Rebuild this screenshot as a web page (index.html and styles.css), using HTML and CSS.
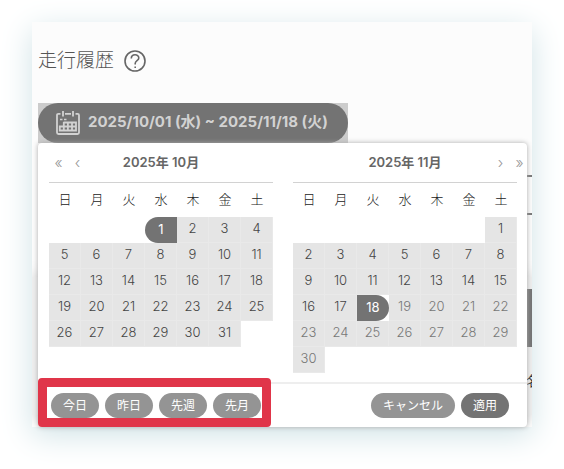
FILE: index.html
```html
<!DOCTYPE html>
<html lang="ja">

<head>
  <meta charset="UTF-8" />
  <meta name="viewport" content="width=device-width, initial-scale=1.0" />
  <title>走行履歴</title>
  <link rel="stylesheet" href="styles.css">
</head>

<body>
  <main class="frame">
    <!-- 背後の一覧 -->
    <div class="backdrop" aria-hidden="true">
      <div class="field"></div>
      <div class="results">
        <div class="results-head"></div>
        <div class="results-name">名</div>
      </div>
    </div>

    <div class="content">
      <header class="title">
        <h1>走行履歴</h1>
        <button class="help" aria-label="ヘルプ">
          <svg width="22" height="22" viewBox="0 0 22 22" fill="none" stroke="#666" stroke-width="1.6">
            <circle cx="11" cy="11" r="10" />
            <path d="M7.3 8.5C7.3 3.6 14.8 3.7 14.8 8C14.8 10.7 11.2 10.7 11.2 13.5V14.6M11.2 16.5V18.1" />
          </svg>
        </button>
      </header>

      <div class="range-wrap">
        <button class="range">
          <svg width="24" height="24" viewBox="0 0 24 24" fill="none" stroke="#d2d2d2" stroke-width="1.8">
            <path d="M4.5 2.8H2.4Q1 2.8 1 4.2V21.5Q1 23 2.5 23H21.5Q23 23 23 21.5V4.2Q23 2.8 21.6 2.8H19.5M9 2.8H15M7 0V5.5M17 0V5.5" />
            <path d="M4 8.5H6.5M8 8.5H10.5" stroke-width="1.4" />
            <path d="M7.5 11.5H20V19.5H3.8V15.5H20M7.8 11V19.5M11.9 11V19.5M16 11V19.5" stroke-width="1.8" />
          </svg>
          <span>2025/10/01 (水) ~ 2025/11/18 (火)</span>
        </button>
      </div>

      <section class="picker">
        <div class="months">
          <div class="month">
            <div class="month-head">
              <div class="nav">
                <button aria-label="前年">«</button>
                <button aria-label="前月">‹</button>
              </div>
              <h2>2025年 10月</h2>
            </div>
            <table class="days" data-start="3" data-count="31" data-from="1"></table>
          </div>
          <div class="month">
            <div class="month-head">
              <h2>2025年 11月</h2>
              <div class="nav nav-next">
                <button aria-label="翌月">›</button>
                <button aria-label="翌年">»</button>
              </div>
            </div>
            <table class="days" data-start="6" data-count="30" data-to="18"></table>
          </div>
        </div>

        <footer class="actions">
          <div class="presets">
            <button class="pill">今日</button>
            <button class="pill">昨日</button>
            <button class="pill">先週</button>
            <button class="pill">先月</button>
          </div>
          <div class="confirm">
            <button class="pill">キャンセル</button>
            <button class="pill pill-apply">適用</button>
          </div>
          <div class="highlight"></div>
        </footer>
      </section>
    </div>
  </main>

  <script>
    const week = ['日', '月', '火', '水', '木', '金', '土'];

    document.querySelectorAll('.days').forEach((table) => {
      const start = Number(table.dataset.start);
      const count = Number(table.dataset.count);
      const from = Number(table.dataset.from);
      const to = Number(table.dataset.to);

      const head = table.createTHead().insertRow();
      week.forEach((name) => {
        const th = document.createElement('th');
        th.scope = 'col';
        th.textContent = name;
        head.appendChild(th);
      });

      const body = table.createTBody();
      for (let i = 0; i < start + count; i += 7) {
        const row = body.insertRow();
        for (let d = i - start + 1; d < i - start + 8; d++) {
          const cell = row.insertCell();
          if (d < 1 || d > count) continue;

          const button = document.createElement('button');
          button.className = 'day';
          button.textContent = d;
          if (d === from) button.classList.add('day-from');
          if (d === to) button.classList.add('day-to');
          // 未来の日付は選択不可
          if (to && d > to) button.disabled = true;
          cell.appendChild(button);
        }
      }
    });
  </script>
</body>

</html>
```

FILE: styles.css
```css
* {
  box-sizing: border-box;
}

body {
  margin: 0;
  padding: 22px 32px 40px;
  background: #fff;
  color: #555;
  font-family: Inter, "Noto Sans CJK JP", sans-serif;
  font-size: 13px;
}

button {
  margin: 0;
  padding: 0;
  border: none;
  background: none;
  color: inherit;
  font: inherit;
  cursor: pointer;
}

h1,
h2 {
  margin: 0;
}

.frame {
  display: grid;
  background: #fcfcfc;
  box-shadow: 0 8px 30px #cfe2e6;
}

.backdrop,
.content {
  grid-area: 1 / 1;
  min-width: 0;
}

.backdrop {
  overflow: hidden;
  padding-top: 153px;
}

.field {
  height: 40px;
  margin-left: 20px;
  border-top: 2px solid #777;
  border-bottom: 2px solid #777;
}

.results {
  height: 138px;
  margin-top: 62px;
  padding-top: 12px;
  background: #eee;
  box-shadow: 0 0 16px #ccc;
}

.results-head {
  height: 58px;
  margin-left: 20px;
  background: #737373;
}

.results-name {
  margin: 24px -8px 0 0;
  color: #333;
  font-size: 14px;
  line-height: 20px;
  text-align: right;
}

.content {
  position: relative;
  padding: 0 5px 0 6px;
}

.title {
  display: flex;
  align-items: center;
  gap: 10px;
  height: 81px;
  padding-bottom: 3px;
}

.title h1 {
  color: #555;
  font-size: 19px;
  font-weight: 300;
  line-height: 28px;
}

.help,
.help svg,
.range svg {
  display: block;
}

.range-wrap {
  width: fit-content;
  background: #ccc;
}

.range {
  display: flex;
  align-items: center;
  gap: 8px;
  height: 40px;
  padding: 0 20px 0 18px;
  border-radius: 20px;
  background: #737373;
  color: #d2d2d2;
  font-size: 15px;
  font-weight: 700;
  line-height: 20px;
  white-space: nowrap;
}

.range span {
  padding-bottom: 3px;
}

.picker {
  border-radius: 4px;
  background: #fff;
  box-shadow: 0 0 5px #aaa;
}

.months {
  display: flex;
  gap: 20px;
  padding: 0 10px 9px 11px;
}

.month {
  flex: 1;
}

.month-head {
  position: relative;
  height: 40px;
  border-bottom: 1px solid #d2d2d2;
}

.month-head h2 {
  color: #666;
  font-size: 13px;
  font-weight: 600;
  line-height: 38px;
  text-align: center;
}

/* 矢印は見出しに重ねる */
.nav {
  position: absolute;
  top: 0;
  left: 0;
  display: flex;
}

.nav-next {
  right: -12px;
  left: auto;
}

.nav button {
  width: 19px;
  color: #999;
  font-size: 15px;
  font-weight: 300;
  line-height: 40px;
}

.days {
  width: 100%;
  border-collapse: collapse;
  table-layout: fixed;
}

.days th {
  height: 34px;
  padding: 0 0 4px;
  color: #222;
  font-size: 13px;
  font-weight: 300;
}

.days td {
  height: 26px;
  padding: 0;
}

.day {
  display: block;
  width: 100%;
  height: 26px;
  padding-bottom: 3px;
  border: 1px solid #e9e9e9;
  border-width: 0 1px 1px 0;
  background: #e5e5e5;
  color: #444;
  font-weight: 300;
}

.day:disabled {
  color: #777;
}

.day-from,
.day-to {
  border: none;
  background: #737373;
  color: #fff;
  font-weight: 400;
}

.day-from {
  border-radius: 13px 0 0 13px;
}

.day-to {
  border-radius: 0 13px 13px 0;
}

.actions {
  position: relative;
  display: flex;
  justify-content: space-between;
  padding: 9px 18px 9px 13px;
  border-top: 2px solid #eee;
}

.presets,
.confirm {
  display: flex;
  gap: 6px;
}

.pill {
  height: 25px;
  padding: 0 12px;
  border-radius: 13px;
  background: #949494;
  color: #fff;
  font-size: 12px;
  line-height: 24px;
  white-space: nowrap;
}

.pill-apply {
  background: #737373;
}

.highlight {
  position: absolute;
  bottom: 0;
  left: 0;
  width: 233px;
  height: 49px;
  border: 9px solid #e03549;
  border-radius: 4px;
  pointer-events: none;
}
```
